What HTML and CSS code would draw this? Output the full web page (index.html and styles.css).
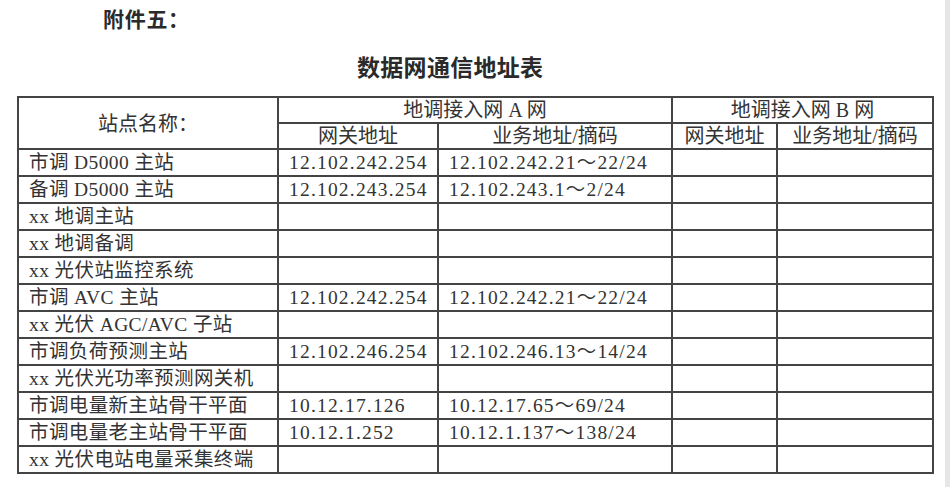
FILE: index.html
```html
<!DOCTYPE html>
<html lang="zh-CN">
<head>
<meta charset="utf-8">
<title>数据网通信地址表</title>
<link rel="stylesheet" href="styles.css">
</head>
<body>
<div class="page">
  <div class="sheet">
    <h1 class="annex">附件五<span class="colon">：</span></h1>
    <h2 class="title">数据网通信地址表</h2>
    <table class="addr">
      <colgroup>
        <col class="c-name">
        <col class="c-gw">
        <col class="c-biz">
        <col class="c-gwb">
        <col class="c-bizb">
      </colgroup>
      <thead>
        <tr>
          <th rowspan="2">站点名称<span class="colon">：</span></th>
          <th colspan="2">地调接入网 A 网</th>
          <th colspan="2">地调接入网 B 网</th>
        </tr>
        <tr>
          <th>网关地址</th>
          <th>业务地址/摘码</th>
          <th>网关地址</th>
          <th>业务地址/摘码</th>
        </tr>
      </thead>
      <tbody>
        <tr><td>市调 D5000 主站</td><td class="ip">12.102.242.254</td><td class="ip">12.102.242.21～22/24</td><td></td><td></td></tr>
        <tr><td>备调 D5000 主站</td><td class="ip">12.102.243.254</td><td class="ip">12.102.243.1～2/24</td><td></td><td></td></tr>
        <tr><td>xx 地调主站</td><td></td><td></td><td></td><td></td></tr>
        <tr><td>xx 地调备调</td><td></td><td></td><td></td><td></td></tr>
        <tr><td>xx 光伏站监控系统</td><td></td><td></td><td></td><td></td></tr>
        <tr><td>市调 AVC 主站</td><td class="ip">12.102.242.254</td><td class="ip">12.102.242.21～22/24</td><td></td><td></td></tr>
        <tr><td>xx 光伏 AGC/AVC 子站</td><td></td><td></td><td></td><td></td></tr>
        <tr><td>市调负荷预测主站</td><td class="ip">12.102.246.254</td><td class="ip">12.102.246.13～14/24</td><td></td><td></td></tr>
        <tr><td>xx 光伏光功率预测网关机</td><td></td><td></td><td></td><td></td></tr>
        <tr><td>市调电量新主站骨干平面</td><td class="ip">10.12.17.126</td><td class="ip">10.12.17.65～69/24</td><td></td><td></td></tr>
        <tr><td>市调电量老主站骨干平面</td><td class="ip">10.12.1.252</td><td class="ip">10.12.1.137～138/24</td><td></td><td></td></tr>
        <tr><td>xx 光伏电站电量采集终端</td><td></td><td></td><td></td><td></td></tr>
      </tbody>
    </table>
  </div>
  <div class="edge"></div>
</div>
</body>
</html>
```

FILE: styles.css
```css
html, body {
  margin: 0;
  padding: 0;
  background: #ffffff;
}

.page {
  display: flex;
  width: 950px;
  height: 487px;
  overflow: hidden;
}

.sheet {
  flex: 1;
  padding: 6px 0 0 17px;
  color: #2e2e2e;
}

.edge {
  width: 5px;
  background: #e6e6e6;
}

.colon {
  font-family: "Noto Sans CJK TC", sans-serif;
}

.annex {
  margin: 0 0 0 86px;
  font-family: "Noto Sans CJK SC", sans-serif;
  font-size: 21px;
  font-weight: 700;
  line-height: 24px;
  letter-spacing: 0.7px;
  color: #2a2a2a;
}

.title {
  margin: 20px 0 0 340px;
  font-family: "Noto Sans CJK SC", sans-serif;
  font-size: 23px;
  font-weight: 700;
  line-height: 32px;
  letter-spacing: 0.3px;
  color: #2a2a2a;
}

.addr {
  margin-top: 14px;
  border-collapse: collapse;
  table-layout: fixed;
  width: 917px;
  font-family: "Liberation Serif", "Noto Sans CJK SC", serif;
  font-size: 19.5px;
  color: #333333;
  border: 2px solid #4a4a4a;
}

.c-name { width: 260px; }
.c-gw { width: 160px; }
.c-biz { width: 234px; }
.c-gwb { width: 105px; }
.c-bizb { width: 156px; }

.addr th,
.addr td {
  border: 2px solid #444444;
  white-space: nowrap;
  overflow: hidden;
}

.addr th {
  font-weight: 400;
  font-size: 20px;
  text-align: center;
  padding: 0;
  height: 24px;
  line-height: 24px;
}

.addr td {
  height: 25px;
  line-height: 25px;
  padding: 0 0 0 10px;
  letter-spacing: 0.4px;
}

.addr td.ip {
  letter-spacing: 1.2px;
}
```
